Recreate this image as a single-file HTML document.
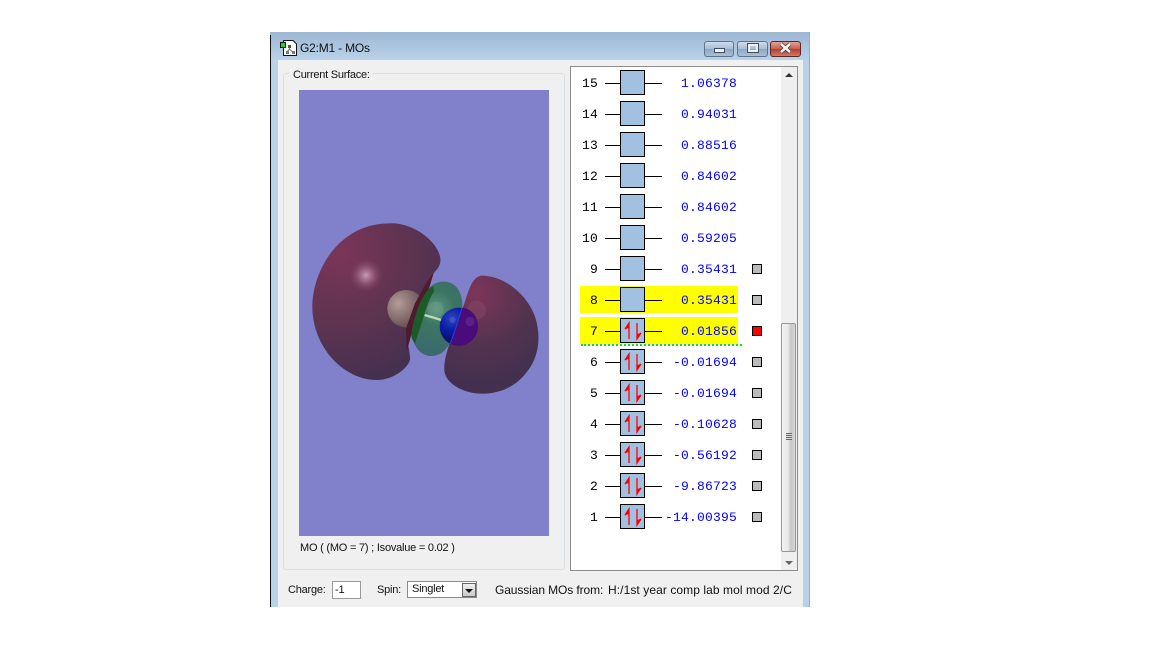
<!DOCTYPE html>
<html><head><meta charset="utf-8"><style>
html,body{margin:0;padding:0;background:#fff;width:1152px;height:648px;overflow:hidden}
body{position:relative;font-family:"Liberation Sans",sans-serif}
.a{position:absolute}
.t{position:absolute;font-size:11px;letter-spacing:-.22px;color:#111;white-space:nowrap;line-height:14px}
.m{position:absolute;font:13px/16px "Liberation Mono",monospace;letter-spacing:.2px;white-space:pre}
.k{color:#000}.b{color:#00f}
.s{position:absolute;left:752px;width:8px;height:8px;background:#bbb;border:1px solid #000}
</style></head><body>
<div class="a" style="left:270px;top:32px;width:540px;height:575px;background:linear-gradient(#9db8d4,#b9d2ea 28px,#b9d2ea)"></div>
<div class="a" style="left:270px;top:35px;width:1px;height:572px;background:#111"></div>
<div class="a" style="left:809px;top:32px;width:1px;height:575px;background:#3fd0f0"></div>
<div class="a" style="left:278px;top:60px;width:525px;height:547px;background:#f0f0f0"></div>

<svg class="a" style="left:280px;top:39px" width="18" height="18" viewBox="0 0 18 18">
<path d="M3.500 1.500H13L16.500 5V16.500H3.500Z" fill="#fff" stroke="#111"/>
<path d="M9.500 6V10M9.500 10L6.500 13.500M9.500 10L13 13.500" stroke="#777" fill="none"/>
<rect x="8" y="6" width="3" height="3" fill="#555"/><rect x="6" y="12" width="3" height="3" fill="#777"/><rect x="12" y="12" width="3" height="3" fill="#777"/>
<rect x="0.500" y="3.500" width="5" height="5" fill="#10e010" stroke="#111"/>
</svg>
<div class="t" style="left:300px;top:41px;font-size:12px;letter-spacing:-.2px">G2:M1 - MOs</div>

<div class="a" style="left:704px;top:41px;width:28px;height:14px;border:1px solid #5f7489;border-radius:3px;background:linear-gradient(#cfdcea,#a9bfd6 48%,#8ea8c3 52%,#a9c0d8)"></div>
<div class="a" style="left:714px;top:48px;width:9px;height:3px;background:#eef2f6;border:1px solid #3d4f63"></div>
<div class="a" style="left:737px;top:41px;width:29px;height:14px;border:1px solid #5f7489;border-radius:3px;background:linear-gradient(#cfdcea,#a9bfd6 48%,#8ea8c3 52%,#a9c0d8)"></div>
<div class="a" style="left:748px;top:44px;width:6px;height:4px;border:2px solid #eef2f6;outline:1px solid #3d4f63"></div>
<div class="a" style="left:770px;top:41px;width:29px;height:14px;border:1px solid #5c2626;border-radius:3px;background:linear-gradient(#e2a195,#c9604e 48%,#b13f2c 52%,#cf7a66)"></div>
<svg class="a" style="left:778px;top:42px" width="16" height="12"><path d="M3 2L12 10M12 2L3 10" stroke="#3d2a2a" stroke-width="4"/><path d="M3 2L12 10M12 2L3 10" stroke="#f4f4f4" stroke-width="2.600"/></svg>

<div class="a" style="left:283px;top:73px;width:280px;height:495px;border:1px solid #d9dfe6;border-radius:3px"></div>
<div class="t" style="left:289px;top:68px;background:#f0f0f0;padding:0 3px 0 4px;letter-spacing:-.25px">Current Surface:</div>

<svg class="a" style="left:299px;top:90px" width="250" height="446" viewBox="299 90 250 446">
<defs>
<radialGradient id="l1" gradientUnits="userSpaceOnUse" cx="120" cy="130" r="400"><stop offset="0" stop-color="#7b3558"/><stop offset=".5" stop-color="#5f3450"/><stop offset="1" stop-color="#43304f"/></radialGradient>
<radialGradient id="l2" gradientUnits="userSpaceOnUse" cx="530" cy="250" r="270"><stop offset="0" stop-color="#7d3558"/><stop offset=".6" stop-color="#52334f"/><stop offset="1" stop-color="#43304f"/></radialGradient>
<radialGradient id="hl" cx=".5" cy=".5" r=".5"><stop offset="0" stop-color="#c79ab5"/><stop offset=".35" stop-color="#a8708f" stop-opacity=".8"/><stop offset="1" stop-color="#7b3558" stop-opacity="0"/></radialGradient>
<radialGradient id="g1" gradientUnits="userSpaceOnUse" cx="410" cy="295" r="130"><stop offset="0" stop-color="#5a9480"/><stop offset=".4" stop-color="#3c7562"/><stop offset="1" stop-color="#3b6a6d"/></radialGradient>
<radialGradient id="h" gradientUnits="userSpaceOnUse" cx="295" cy="280" r="70"><stop offset="0" stop-color="#b59b98"/><stop offset="1" stop-color="#6d5658"/></radialGradient>
<radialGradient id="n" gradientUnits="userSpaceOnUse" cx="455" cy="325" r="70"><stop offset="0" stop-color="#2d44c0"/><stop offset=".5" stop-color="#0b1ea8"/><stop offset="1" stop-color="#06106a"/></radialGradient>
</defs>
<rect x="299" y="90" width="250" height="446" fill="#8080cb"/>
<g transform="translate(300 210) scale(.33333)">
<path d="M270 40C330 38 395 80 415 125C428 155 420 170 400 190C375 240 335 300 322 360C318 395 332 425 330 450C320 480 275 510 230 510C130 510 37 410 37 290C37 190 110 40 270 40Z" fill="url(#l1)"/>
<circle cx="198" cy="196" r="52" fill="url(#hl)"/>
<path d="M432 215C465 215 487 245 487 285C487 330 460 395 430 425C405 445 365 445 345 405C325 365 345 300 375 250C390 225 410 215 432 215Z" fill="url(#g1)"/>
<circle cx="407" cy="298" r="24" fill="#7cae9a" opacity=".3"/>
<path d="M545 197C610 197 680 250 705 320C725 380 715 440 685 480C650 530 600 551 545 551C490 551 435 520 433 480C430 430 470 350 490 290C505 245 515 200 545 197Z" fill="url(#l2)"/>
<circle cx="530" cy="300" r="28" fill="#9a5c7c" opacity=".25"/>
<circle cx="318" cy="296" r="56" fill="url(#h)"/>
<path d="M402 186L375 225L345 280L318 355L320 425L335 370L362 290L387 235Z" fill="#4e1a2e"/>
<path d="M400 228C385 235 375 250 365 268C350 300 335 345 334 378C336 388 340 395 345 402C350 380 358 360 365 340C375 305 385 270 402 245Z" fill="#1c5a28"/>
<path d="M374 315L424 330" stroke="#bddcaa" stroke-width="7"/>
<circle cx="476" cy="350" r="57" fill="url(#n)"/>
<path d="M486 293C515 296 534 320 534 350C534 382 508 407 476 407C466 407 458 405 450 401C465 365 475 330 486 293Z" fill="#4a0c7a"/>
<path d="M486 293C475 330 465 365 450 401" stroke="#2c3ce8" stroke-width="3" fill="none"/>
<circle cx="510" cy="335" r="14" fill="#8a5bb0" opacity=".25"/>
<circle cx="458" cy="330" r="9" fill="#7c88dc" opacity=".3"/>
</g>
</svg>
<div class="t" style="left:300px;top:541px">MO ( (MO = 7) ; Isovalue = 0.02 )</div>

<div class="a" style="left:570px;top:66px;width:226px;height:503px;background:#fff;border:1px solid #8c8c8c"></div>
<div class="a" style="left:781px;top:67px;width:16px;height:503px;background:#efefef"></div>
<div class="a" style="left:781px;top:323px;width:13px;height:227px;border:1px solid #979797;border-radius:2px;background:linear-gradient(90deg,#f2f2f2,#e8e8e8 45%,#c6c6c6 70%,#d6d6d6)"></div>
<div class="a" style="left:786px;top:433px;width:6px;height:7px;background:repeating-linear-gradient(#666 0 1px,#ddd 1px 2px)"></div>
<div class="a" style="left:785px;top:73px;width:0;height:0;border:4px solid transparent;border-top:0;border-bottom:4px solid #333"></div>
<div class="a" style="left:785px;top:561px;width:0;height:0;border:4px solid transparent;border-bottom:0;border-top:4px solid #666"></div>

<div class="a" style="left:580px;top:286px;width:158px;height:27px;background:#ff0"></div>
<div class="a" style="left:580px;top:317px;width:158px;height:27px;background:#ff0"></div>
<div class="a" style="left:581px;top:344px;width:161px;height:0;border-top:2px dotted #10e010"></div>

<svg class="a" style="left:570px;top:60px" width="210" height="480" viewBox="570 60 210 480">
<defs>
<g id="box"><path d="M605 .5H662" stroke="#000"/><rect x="620.500" y="-12.500" width="24" height="24" fill="#a2c0df" stroke="#000"/></g>
<g id="ar"><path d="M629 8V-8L625 -2L627.500 -3.500L629 -3ZM637 -8V8L641 2L638.500 3.500L637 3Z" stroke="#f00" stroke-width="1.300" fill="#f00"/></g>
</defs>
<use href="#box" y="83"/><use href="#box" y="114"/><use href="#box" y="145"/><use href="#box" y="176"/><use href="#box" y="207"/><use href="#box" y="238"/><use href="#box" y="269"/><use href="#box" y="300"/><use href="#box" y="331"/><use href="#box" y="362"/><use href="#box" y="393"/><use href="#box" y="424"/><use href="#box" y="455"/><use href="#box" y="486"/><use href="#box" y="517"/>
<use href="#ar" y="331"/><use href="#ar" y="362"/><use href="#ar" y="393"/><use href="#ar" y="424"/><use href="#ar" y="455"/><use href="#ar" y="486"/><use href="#ar" y="517"/>
</svg>

<div class="m k" style="left:582px;top:76px">15</div><div class="m b" style="left:681px;top:76px">1.06378</div>
<div class="m k" style="left:582px;top:107px">14</div><div class="m b" style="left:681px;top:107px">0.94031</div>
<div class="m k" style="left:582px;top:138px">13</div><div class="m b" style="left:681px;top:138px">0.88516</div>
<div class="m k" style="left:582px;top:169px">12</div><div class="m b" style="left:681px;top:169px">0.84602</div>
<div class="m k" style="left:582px;top:200px">11</div><div class="m b" style="left:681px;top:200px">0.84602</div>
<div class="m k" style="left:582px;top:231px">10</div><div class="m b" style="left:681px;top:231px">0.59205</div>
<div class="m k" style="left:590px;top:262px">9</div><div class="m b" style="left:681px;top:262px">0.35431</div>
<div class="m k" style="left:590px;top:293px">8</div><div class="m b" style="left:681px;top:293px">0.35431</div>
<div class="m k" style="left:590px;top:324px">7</div><div class="m b" style="left:681px;top:324px">0.01856</div>
<div class="m k" style="left:590px;top:355px">6</div><div class="m b" style="left:673px;top:355px">-0.01694</div>
<div class="m k" style="left:590px;top:386px">5</div><div class="m b" style="left:673px;top:386px">-0.01694</div>
<div class="m k" style="left:590px;top:417px">4</div><div class="m b" style="left:673px;top:417px">-0.10628</div>
<div class="m k" style="left:590px;top:448px">3</div><div class="m b" style="left:673px;top:448px">-0.56192</div>
<div class="m k" style="left:590px;top:479px">2</div><div class="m b" style="left:673px;top:479px">-9.86723</div>
<div class="m k" style="left:590px;top:510px">1</div><div class="m b" style="left:665px;top:510px">-14.00395</div>

<div class="s" style="top:264px"></div>
<div class="s" style="top:295px"></div>
<div class="s" style="top:326px;background:#f00"></div>
<div class="s" style="top:357px"></div>
<div class="s" style="top:388px"></div>
<div class="s" style="top:419px"></div>
<div class="s" style="top:450px"></div>
<div class="s" style="top:481px"></div>
<div class="s" style="top:512px"></div>

<div class="t" style="left:288px;top:583px">Charge:</div>
<div class="a" style="left:332px;top:581px;width:27px;height:16px;background:#fff;border:1px solid #9a9a9a"></div>
<div class="t" style="left:335px;top:583px">-1</div>
<div class="t" style="left:377px;top:583px">Spin:</div>
<div class="a" style="left:407px;top:581px;width:68px;height:15px;background:#fff;border:1px solid #8a8a8a"></div>
<div class="t" style="left:412px;top:582px">Singlet</div>
<div class="a" style="left:462px;top:583px;width:14px;height:14px;background:linear-gradient(#efefef,#c9c9c9);border:1px solid #666;box-sizing:border-box"></div>
<div class="a" style="left:465px;top:589px;width:0;height:0;border:4px solid transparent;border-bottom:0;border-top:4px solid #111"></div>
<div class="t" style="left:495px;top:583px;font-size:12px;letter-spacing:-.1px">Gaussian MOs from:</div>
<div class="t" style="left:608px;top:583px;font-size:12px;letter-spacing:.08px">H:/1st year comp lab mol mod 2/C</div>
</body></html>
